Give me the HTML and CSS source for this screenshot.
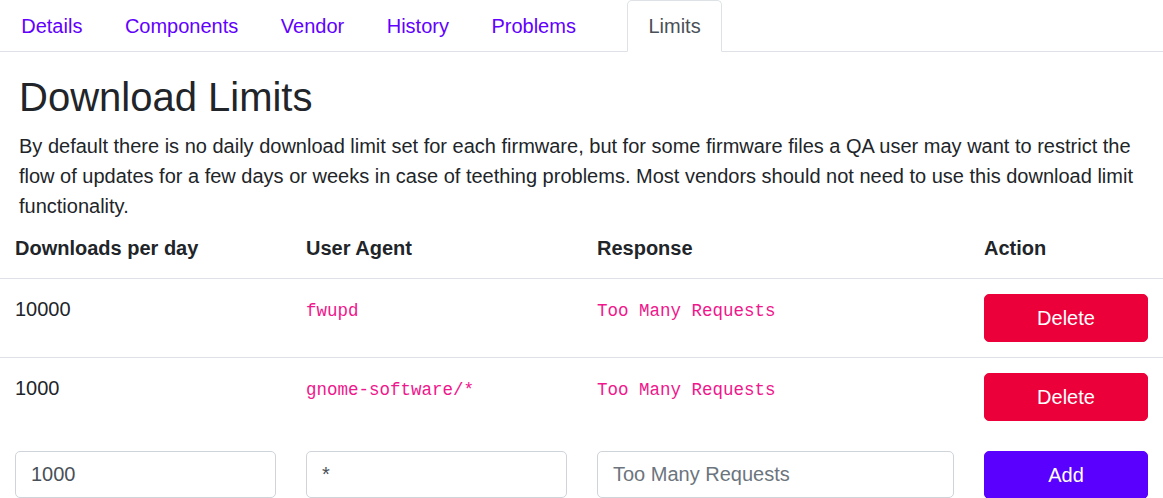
FILE: index.html
```html
<!DOCTYPE html>
<html lang="en">
<head>
<meta charset="utf-8">
<title>Download Limits</title>
<link rel="stylesheet" href="styles.css">
</head>
<body>
<ul class="tabs">
  <li class="tab"><a class="tab-link" href="#">Details</a></li>
  <li class="tab"><a class="tab-link" href="#">Components</a></li>
  <li class="tab"><a class="tab-link" href="#">Vendor</a></li>
  <li class="tab"><a class="tab-link" href="#">History</a></li>
  <li class="tab"><a class="tab-link" href="#">Problems</a></li>
  <li class="tab tab-gap"><a class="tab-link active" href="#">Limits</a></li>
</ul>
<div class="intro">
  <h1 class="title">Download Limits</h1>
  <p class="lead">By default there is no daily download limit set for each firmware, but for some firmware files a QA user may want to restrict the flow of updates for a few days or weeks in case of teething problems. Most vendors should not need to use this download limit functionality.</p>
</div>
<table class="limits">
  <colgroup>
    <col class="c1"><col class="c2"><col class="c3"><col class="c4">
  </colgroup>
  <thead>
    <tr>
      <th>Downloads per day</th>
      <th>User Agent</th>
      <th>Response</th>
      <th>Action</th>
    </tr>
  </thead>
  <tbody>
    <tr class="row">
      <td>10000</td>
      <td><code class="code">fwupd</code></td>
      <td><code class="code">Too Many Requests</code></td>
      <td><button class="btn btn-delete">Delete</button></td>
    </tr>
    <tr class="row">
      <td>1000</td>
      <td><code class="code">gnome-software/*</code></td>
      <td><code class="code">Too Many Requests</code></td>
      <td><button class="btn btn-delete">Delete</button></td>
    </tr>
    <tr class="row new-row">
      <td><input class="field" type="text" value="1000"></td>
      <td><input class="field" type="text" value="*"></td>
      <td><input class="field" type="text" placeholder="Too Many Requests"></td>
      <td><button class="btn btn-add">Add</button></td>
    </tr>
  </tbody>
</table>
</body>
</html>
```

FILE: styles.css
```css
* { box-sizing: border-box; }

html, body {
  margin: 0;
  padding: 0;
  background: #fff;
}

body {
  font-family: "Liberation Sans", Arial, sans-serif;
  font-size: 20px;
  line-height: 30px;
  color: #212529;
  overflow: hidden;
}

.tabs {
  display: flex;
  list-style: none;
  margin: 0;
  padding: 0;
  border-bottom: 1px solid #dee2e6;
}

.tab {
  margin-bottom: -1px;
}

.tab-gap {
  margin-left: 30px;
}

.tab-link {
  display: block;
  padding: 10px 20.25px;
  border: 1px solid transparent;
  border-top-left-radius: 5px;
  border-top-right-radius: 5px;
  color: #6200ff;
  text-decoration: none;
}

.tab-link.active {
  color: #495057;
  background: #fff;
  border-color: #dee2e6 #dee2e6 #fff;
}

.intro {
  padding: 21px 18px 0 19px;
}

.title {
  margin: 0 0 10px 0;
  font-size: 40px;
  line-height: 48px;
  font-weight: 400;
}

.lead {
  margin: 0;
}

.limits {
  width: 100%;
  border-collapse: collapse;
  table-layout: fixed;
}

.c1 { width: 291px; }
.c2 { width: 291px; }
.c3 { width: 387px; }
.c4 { width: 194px; }

.limits th {
  text-align: left;
  font-weight: 700;
  padding: 12px 15px 15px 15px;
  vertical-align: bottom;
  border-bottom: 1px solid #dee2e6;
}

.limits td {
  padding: 15px;
  vertical-align: top;
}

.row + .row td {
  border-top: 1px solid #dee2e6;
}

.row + .new-row td {
  border-top: 0;
}

.code {
  font-family: "Liberation Mono", "Courier New", monospace;
  font-size: 17.5px;
  color: #f0168c;
}

.btn {
  display: block;
  width: 100%;
  height: 48px;
  padding: 8px 15px;
  border: 1px solid transparent;
  border-radius: 5px;
  font-family: inherit;
  font-size: 20px;
  line-height: 30px;
  color: #fff;
  text-align: center;
  cursor: pointer;
}

.btn-delete {
  background: #ec0039;
  border-color: #ec0039;
}

.btn-add {
  background: #5a00ff;
  border-color: #5a00ff;
}

.field {
  display: block;
  width: 100%;
  height: 47px;
  padding: 7.5px 15px;
  border: 1px solid #ced4da;
  border-radius: 5px;
  font-family: inherit;
  font-size: 20px;
  line-height: 30px;
  color: #495057;
  background: #fff;
}

.field::placeholder {
  color: #6c757d;
  opacity: 1;
}
```
